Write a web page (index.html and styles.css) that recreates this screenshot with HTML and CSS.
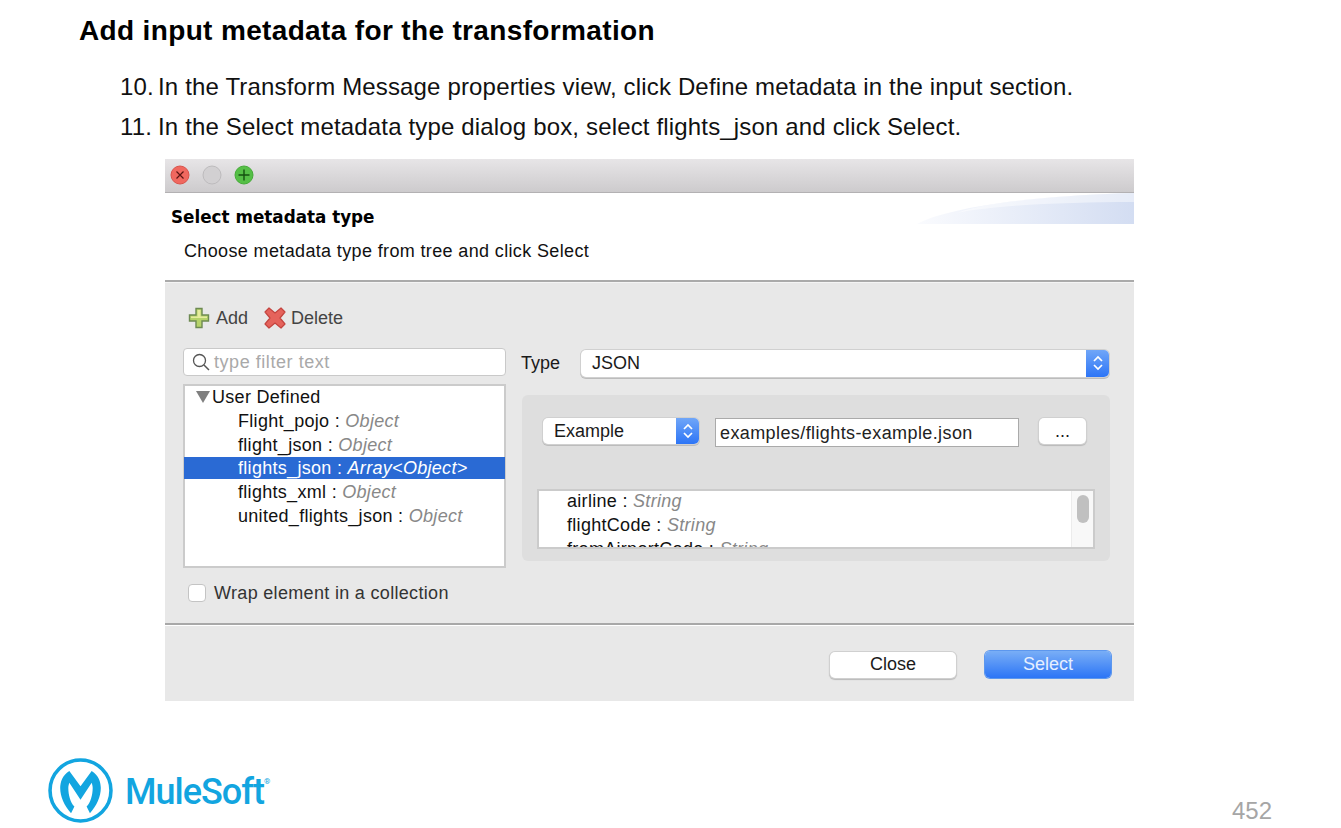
FILE: index.html
```html
<!DOCTYPE html>
<html lang="en">
<head>
<meta charset="utf-8">
<title>Add input metadata for the transformation</title>
<link rel="stylesheet" href="styles.css">
</head>
<body>
<main class="slide">
  <h1 class="heading">Add input metadata for the transformation</h1>
  <ol class="steps">
    <li class="step"><span class="step-num">10.</span><span>In the Transform Message properties view, click Define metadata in the input section.</span></li>
    <li class="step"><span class="step-num">11.</span><span>In the Select metadata type dialog box, select flights_json and click Select.</span></li>
  </ol>
  <section class="dialog">
    <div class="titlebar">
      <svg class="light" viewBox="0 0 20 20"><circle cx="10" cy="10" r="9" fill="#f0685f" stroke="#d9534b"/><path d="M6.500 6.500l7 7M13.500 6.500l-7 7" stroke="#5c1512" stroke-width="1.200"/></svg>
      <svg class="light" viewBox="0 0 20 20"><circle cx="10" cy="10" r="9" fill="#d2d0d2" stroke="#bdbbbd"/></svg>
      <svg class="light" viewBox="0 0 20 20"><circle cx="10" cy="10" r="9" fill="#55bf46" stroke="#45ab38"/><path d="M10 4.500v11M4.500 10h11" stroke="#14520f" stroke-width="1.400"/></svg>
    </div>
    <header class="dialog-head">
      <svg class="swoosh" viewBox="0 0 217 31" preserveAspectRatio="none">
        <defs><linearGradient id="sw" x1="0" x2="1" y1="0" y2="0"><stop offset="0" stop-color="#fafbfe"/><stop offset="1" stop-color="#d3ddf2"/></linearGradient></defs>
        <path d="M0 31C30 15 110 3 217 0V31Z" fill="url(#sw)"/>
        <path d="M40 20C80 12 150 9 217 9V0C110 3 60 12 40 20Z" fill="#fff" fill-opacity="0.450"/>
      </svg>
      <h2 class="dialog-title">Select metadata type</h2>
      <p class="dialog-sub">Choose metadata type from tree and click Select</p>
    </header>
    <div class="dialog-body">
      <div class="toolbar">
        <span class="tool">
          <svg class="tool-icon" viewBox="0 0 22 22"><path d="M8 1.500h6v6.500h6.500v6H14v6.500H8V14H1.500V8H8Z" fill="#b6d36a" stroke="#6d8a52" stroke-width="1.400"/><path d="M9.500 3h3v6.500H19v1.500H3V9.500h6.500Z" fill="#e6ec9e"/></svg>
          Add
        </span>
        <span class="tool tool-delete">
          <svg class="tool-icon" viewBox="0 0 22 22"><path d="M5 1 11 6 17 1 21 5 16 11 21 17 17 21 11 16 5 21 1 17 6 11 1 5Z" fill="#e5635c" stroke="#c4443f" stroke-width="1.200" stroke-linejoin="round"/></svg>
          Delete
        </span>
      </div>
      <div class="columns">
        <div class="left">
          <div class="search">
            <svg class="search-icon" viewBox="0 0 18 18"><circle cx="7.500" cy="7.500" r="6" fill="none" stroke="#555" stroke-width="1.300"/><path d="M12 12l5 5" stroke="#555" stroke-width="1.500"/></svg>
            <span>type filter text</span>
          </div>
          <div class="tree">
            <div class="tree-row tree-root"><span class="twisty"></span>User Defined</div>
            <div class="tree-row tree-leaf">Flight_pojo : <em>Object</em></div>
            <div class="tree-row tree-leaf">flight_json : <em>Object</em></div>
            <div class="tree-row tree-leaf is-selected">flights_json : <em>Array&lt;Object&gt;</em></div>
            <div class="tree-row tree-leaf">flights_xml : <em>Object</em></div>
            <div class="tree-row tree-leaf">united_flights_json : <em>Object</em></div>
          </div>
          <label class="check"><span class="checkbox"></span>Wrap element in a collection</label>
        </div>
        <div class="right">
          <div class="type-row">
            <span class="type-label">Type</span>
            <div class="select select-wide">
              <span class="select-text">JSON</span>
              <span class="stepper"><svg viewBox="0 0 12 20"><path d="M2 8l4-4 4 4M2 12l4 4 4-4" fill="none" stroke="#fff" stroke-width="1.700"/></svg></span>
            </div>
          </div>
          <div class="panel">
            <div class="panel-row">
              <div class="select select-small">
                <span class="select-text">Example</span>
                <span class="stepper"><svg viewBox="0 0 12 20"><path d="M2 8l4-4 4 4M2 12l4 4 4-4" fill="none" stroke="#fff" stroke-width="1.700"/></svg></span>
              </div>
              <div class="path-input">examples/flights-example.json</div>
              <button class="btn btn-dots" type="button">...</button>
            </div>
            <div class="fields">
              <div class="field-list">
                <div class="field-row">airline : <em>String</em></div>
                <div class="field-row">flightCode : <em>String</em></div>
                <div class="field-row">fromAirportCode : <em>String</em></div>
              </div>
              <div class="scrollbar"><span class="thumb"></span></div>
            </div>
          </div>
        </div>
      </div>
    </div>
    <footer class="dialog-foot">
      <button class="btn btn-close" type="button">Close</button>
      <button class="btn btn-primary" type="button">Select</button>
    </footer>
  </section>
  <div class="slide-foot">
    <div class="logo">
      <svg class="logo-mark" viewBox="0 0 64 64">
        <circle cx="32" cy="32" r="30" fill="none" stroke="#12a5e0" stroke-width="3.500"/>
        <path d="M21 12.700L32 27.700L43 12.700C50 17 52 24 52 29.500C52 38 48 47 41.300 54.300L38 47.700C42 44 44 36 44 29.500C44 27.500 43.500 26 43 24.300L32 41L21 24.300C20.500 26 20 27.500 20 29.500C20 36 22 44 26 47.700L22.700 54.300C16 47 12 38 12 29.500C12 24 14 17 21 12.700Z" fill="#12a5e0"/>
      </svg>
      <span class="logo-text">MuleSoft<sup class="logo-reg">®</sup></span>
    </div>
    <span class="page-num">452</span>
  </div>
</main>
</body>
</html>
```
FILE: styles.css
```css
* { box-sizing: border-box; }
html, body { margin: 0; padding: 0; background: #fff; }
body { font-family: "Liberation Sans", Arial, sans-serif; color: #000; overflow: hidden; }
.slide { width: 1341px; height: 828px; padding-top: 14px; display: flex; flex-direction: column; }

.heading { margin: 0 0 0 79px; font-size: 28px; line-height: 34px; font-weight: 700; letter-spacing: 0.350px; }
.steps { list-style: none; margin: 25px 0 0 120px; padding: 0; font-size: 24px; line-height: 28px; color: #111; letter-spacing: 0.160px; }
.step { display: flex; margin-bottom: 12px; }
.step-num { width: 38px; flex: none; }

.dialog { margin: 6px 0 0 165px; width: 969px; height: 542px; display: flex; flex-direction: column; background: #e8e8e8; font-size: 18px; color: #1a1a1a; }
.titlebar { height: 34px; display: flex; align-items: center; gap: 12px; padding: 0 0 2px 5px; background: linear-gradient(#e7e5e7, #cdcbcd); border-bottom: 1px solid #b3b1b3; }
.light { width: 20px; height: 20px; }
.dialog-head { position: relative; height: 89px; background: #fff; border-bottom: 2px solid #aaa; padding: 12px 0 0 6px; }
.swoosh { position: absolute; right: 0; top: 0; width: 217px; height: 31px; }
.dialog-title { margin: 0; font-family: "DejaVu Sans", sans-serif; font-size: 16.800px; line-height: 24px; font-weight: 700; color: #000; }
.dialog-sub { margin: 11px 0 0 13px; line-height: 22px; color: #111; letter-spacing: 0.360px; }

.dialog-body { flex: 1; border-top: 1px solid #f4f4f4; border-bottom: 2px solid #a8a8a8; padding: 23px 24px 0 18px; }
.toolbar { display: flex; gap: 15px; height: 24px; padding-left: 5px; color: #444; }
.tool { display: flex; align-items: center; gap: 6px; }
.tool-delete { gap: 5px; margin-left: 1px; }
.tool-icon { width: 22px; height: 22px; }
.columns { display: flex; gap: 15px; margin-top: 18px; }
.left { width: 323px; flex: none; }
.search { height: 28px; display: flex; align-items: center; gap: 4px; padding-left: 8px; background: #fff; border: 1px solid #c9c9c9; border-radius: 4px; color: #a9a9a9; letter-spacing: 0.550px; }
.search-icon { width: 18px; height: 18px; }
.tree { margin-top: 8px; height: 184px; background: #fff; border: 2px solid #cbcbcb; color: #111; letter-spacing: 0.300px; }
.tree-row { height: 22px; margin-bottom: 1.800px; line-height: 22px; white-space: nowrap; }
.tree-row em, .field-row em { color: #888; }
.tree-root { display: flex; align-items: center; padding-left: 11px; gap: 2px; }
.twisty { width: 0; height: 0; border-left: 7px solid transparent; border-right: 7px solid transparent; border-top: 12px solid #7f7f7f; }
.tree-leaf { padding-left: 53px; }
.is-selected { margin-left: -1px; margin-right: -1px; padding-left: 54px; background: #2a6ad4; color: #fff; }
.is-selected em { color: #fff; }
.check { display: flex; align-items: center; gap: 8px; margin: 16px 0 0 5px; height: 18px; color: #333; letter-spacing: 0.320px; }
.checkbox { width: 18px; height: 18px; background: #fff; border: 1px solid #c4c4c4; border-radius: 4px; }

.right { flex: 1; }
.type-row { display: flex; align-items: center; gap: 19px; height: 28px; margin-top: 1px; }
.type-label { width: 40px; padding-top: 1px; }
.select { display: flex; justify-content: space-between; align-items: center; background: #fff; border-radius: 5px; box-shadow: 0 0 0 1px #d0d0d0, 0 1px 0 1px #bcbcbc; }
.select-wide { flex: 1; height: 27px; margin: 0 1px; }
.select-small { width: 156px; height: 26px; margin: 0 1px; }
.select-text { padding-left: 11px; }
.stepper { width: 23px; height: 100%; display: flex; align-items: center; justify-content: center; background: linear-gradient(#70a6f8, #2d75f6); border-radius: 0 5px 5px 0; }
.stepper svg { width: 12px; height: 20px; }
.panel { margin-top: 18px; margin-left: 1px; height: 166px; padding: 23px 15px 0 15px; background: #dedede; border-radius: 6px; }
.panel-row { display: flex; align-items: flex-start; padding-left: 5px; }
.path-input { margin-left: 15px; width: 304px; height: 29px; line-height: 28px; padding-left: 4px; background: #fff; border: 1px solid #aaa; color: #222; letter-spacing: 0.400px; }
.btn { font: inherit; border: 0; border-radius: 5px; padding: 0; background: #fff; color: #1a1a1a; box-shadow: 0 0 0 1px #d0d0d0, 0 1px 1px 1px #b9b9b9; }
.btn-dots { margin-left: 20px; width: 47px; height: 26px; line-height: 22px; }
.fields { margin-top: 42px; height: 60px; display: flex; background: #fff; border: 2px solid #cbcbcb; }
.field-list { flex: 1; padding-left: 28px; overflow: hidden; color: #111; letter-spacing: 0.300px; }
.field-row { height: 24px; line-height: 21px; white-space: nowrap; }
.scrollbar { width: 22px; flex: none; padding: 4px 0 0 5px; background: #f8f8f8; border-left: 1px solid #ececec; }
.thumb { display: block; width: 12px; height: 28px; border-radius: 6px; background: #c0c0c0; }

.dialog-foot { height: 76px; flex: none; display: flex; justify-content: flex-end; gap: 29px; padding: 26px 23px 0 0; border-top: 1px solid #fff; }
.btn-close { width: 126px; height: 26px; padding-bottom: 2px; }
.btn-primary { width: 126px; height: 27px; margin-top: -1px; color: #e6efff; background: linear-gradient(#79aef6, #2c75f6); box-shadow: 0 0 0 1px #5c97ee; }

.slide-foot { flex: 1; display: flex; justify-content: space-between; align-items: flex-end; padding: 0 69px 3px 48px; }
.logo { display: flex; align-items: center; gap: 12px; margin-bottom: 2px; }
.logo-mark { width: 65px; height: 65px; }
.logo-text { font-family: Roboto, sans-serif; font-weight: 500; font-size: 36px; line-height: 40px; color: #12a5e0; letter-spacing: -1px; padding-top: 2px; }
.logo-reg { font-size: 8px; vertical-align: 20px; line-height: 0; letter-spacing: 0; }
.page-num { font-size: 24px; line-height: 28px; color: #a6a6a6; }
```
